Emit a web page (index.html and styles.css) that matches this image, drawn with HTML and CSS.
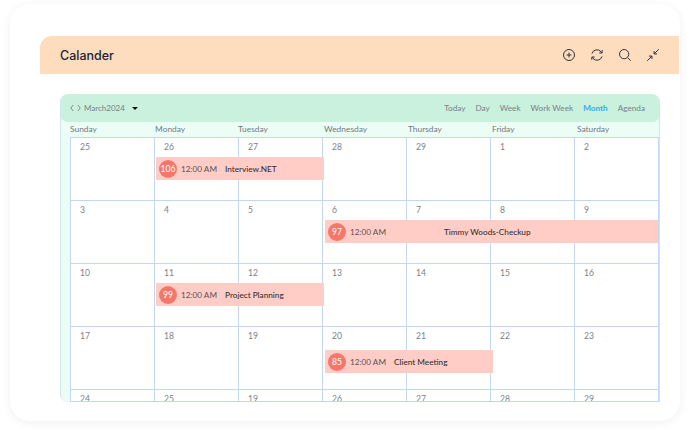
FILE: index.html
```html
<!DOCTYPE html>
<html lang="en">
<head>
  <meta charset="UTF-8">
  <meta name="viewport" content="width=device-width, initial-scale=1.0">
  <title>Calander</title>
  <link rel="stylesheet" href="styles.css">
</head>
<body>
  <div class="card">
    <!-- Page header -->
    <div class="page-header">
      <h1>Calander</h1>
      <div class="header-icons">
        <svg class="icon" viewBox="0 0 16 16"><circle cx="8" cy="8" r="6.3"/><path d="M8 5.2v5.6M5.2 8h5.6"/></svg>
        <svg class="icon" viewBox="0 0 16 16"><path d="M2.2 6.4A6 6 0 0 1 12.6 4.2L13.8 5.6"/><path d="M13.9 2.4v3.3h-3.3"/><path d="M13.8 9.6A6 6 0 0 1 3.4 11.8L2.2 10.4"/><path d="M2.1 13.6v-3.3h3.3"/></svg>
        <svg class="icon" viewBox="0 0 16 16"><circle cx="7" cy="7" r="5.3"/><path d="M11 11l3.6 3.6"/></svg>
        <svg class="icon" viewBox="0 0 16 16"><path d="M14.6 1.4L9.4 6.6M9.2 3.4v3.4h3.4"/><path d="M1.4 14.6l5.2-5.2M6.8 12.6V9.2H3.4"/></svg>
      </div>
    </div>

    <!-- Calendar -->
    <div class="calendar">
      <div class="toolbar">
        <div class="toolbar-left">
          <svg class="chevrons" viewBox="0 0 11 8"><path d="M3.2 1L.8 4l2.4 3"/><path d="M7.8 1l2.4 3-2.4 3"/></svg>
          <span class="month-label">March2024</span>
          <span class="caret"></span>
        </div>
        <div class="views">
          <span>Today</span>
          <span>Day</span>
          <span>Week</span>
          <span>Work Week</span>
          <span class="active">Month</span>
          <span>Agenda</span>
        </div>
      </div>

      <div class="weekdays">
        <span>Sunday</span>
        <span>Monday</span>
        <span>Tuesday</span>
        <span>Wednesday</span>
        <span>Thursday</span>
        <span>Friday</span>
        <span>Saturday</span>
      </div>

      <div class="grid">
        <div class="week">
          <div class="day">25</div><div class="day">26</div><div class="day">27</div><div class="day">28</div><div class="day">29</div><div class="day">1</div><div class="day">2</div>
          <div class="event event-mon">
            <span class="badge">106</span><span class="time">12:00 AM</span><span class="title">Interview.NET</span>
          </div>
        </div>
        <div class="week">
          <div class="day">3</div><div class="day">4</div><div class="day">5</div><div class="day">6</div><div class="day">7</div><div class="day">8</div><div class="day">9</div>
          <div class="event event-wide">
            <span class="badge">97</span><span class="time">12:00 AM</span><span class="title">Timmy Woods-Checkup</span>
          </div>
        </div>
        <div class="week">
          <div class="day">10</div><div class="day">11</div><div class="day">12</div><div class="day">13</div><div class="day">14</div><div class="day">15</div><div class="day">16</div>
          <div class="event event-mon">
            <span class="badge">99</span><span class="time">12:00 AM</span><span class="title">Project Planning</span>
          </div>
        </div>
        <div class="week">
          <div class="day">17</div><div class="day">18</div><div class="day">19</div><div class="day">20</div><div class="day">21</div><div class="day">22</div><div class="day">23</div>
          <div class="event event-wed">
            <span class="badge">85</span><span class="time">12:00 AM</span><span class="title">Client Meeting</span>
          </div>
        </div>
        <div class="week week-cut">
          <div class="day">24</div><div class="day">25</div><div class="day">19</div><div class="day">26</div><div class="day">27</div><div class="day">28</div><div class="day">29</div>
        </div>
      </div>
    </div>
  </div>
</body>
</html>
```

FILE: styles.css
```css
* {
  box-sizing: border-box;
}
body {
  margin: 0;
  width: 690px;
  height: 435px;
  overflow: hidden;
  background-color: #fff;
  font-family: "Lato", Arial, sans-serif;
}
.card {
  width: 670px;
  height: 417px;
  margin: 4px 0 0 10px;
  padding: 32px 1px 0 30px;
  background-color: #fff;
  border-radius: 20px;
  box-shadow: 0 2px 10px rgba(60, 60, 80, 0.07);
}

/* header */
.page-header {
  display: flex;
  justify-content: space-between;
  align-items: center;
  height: 38px;
  padding: 0 19px 0 20px;
  background-color: #fedcbe;
  border-top-left-radius: 12px;
}
.page-header h1 {
  margin: 0;
  font-family: "Inter", Arial, sans-serif;
  font-size: 12.5px;
  font-weight: 500;
  color: #1f2433;
}
.header-icons {
  display: flex;
  gap: 14px;
}
.icon {
  width: 14px;
  height: 14px;
  fill: none;
  stroke: #2b2f3a;
  stroke-width: 1.1;
}

/* calendar */
.calendar {
  width: 600px;
  height: 308px;
  margin: 20px 0 0 20px;
  overflow: hidden;
  background-color: #ecfdf5;
  border-left: 1px solid #d3e4f5;
  border-right: 1px solid #d3e4f5;
  border-radius: 8px 8px 0 8px;
}
.toolbar {
  display: flex;
  justify-content: space-between;
  align-items: center;
  height: 28px;
  margin: 0 -1px;
  padding: 0 15px 0 10px;
  background-color: #c9f1dd;
  border-radius: 8px;
  font-size: 8.2px;
  color: #7c8088;
}
.toolbar-left {
  display: flex;
  align-items: center;
}
.chevrons {
  width: 11px;
  height: 8px;
  fill: none;
  stroke: #7c8088;
  stroke-width: 0.9;
}
.month-label {
  margin-left: 3px;
  font-size: 8px;
}
.caret {
  margin-left: 7px;
  border-top: 3px solid #111;
  border-left: 3px solid transparent;
  border-right: 3px solid transparent;
}
.views {
  display: flex;
  gap: 10px;
}
.views .active {
  color: #3ba5f5;
  font-weight: 700;
}
.weekdays {
  display: grid;
  grid-template-columns: 85px 83px 86px 84px 84px 85px 1fr;
  height: 15px;
  padding-left: 9px;
  font-size: 8.4px;
  line-height: 15px;
  color: #74787f;
}

.grid {
  width: 589px;
  margin-left: 9px;
  background-color: #fff;
  border-top: 1px solid #c5d6f2;
  border-left: 1px solid #c5d6f2;
}
.week {
  display: grid;
  grid-template-columns: repeat(7, 84px);
  height: 63px;
}
.week-cut {
  height: 12px;
}
.day {
  grid-row: 1;
  padding: 4px 0 0 9px;
  overflow: hidden;
  border-right: 1px solid #c5d6f2;
  border-bottom: 1px solid #c5d6f2;
  font-size: 8.6px;
  line-height: 11px;
  color: #7c8088;
}
.day:nth-child(1) { grid-column: 1; }
.day:nth-child(2) { grid-column: 2; }
.day:nth-child(3) { grid-column: 3; }
.day:nth-child(4) { grid-column: 4; }
.day:nth-child(5) { grid-column: 5; }
.day:nth-child(6) { grid-column: 6; }
.day:nth-child(7) { grid-column: 7; }

/* events sit on top of the day cells */
.event {
  grid-row: 1;
  align-self: start;
  display: flex;
  align-items: center;
  height: 23px;
  margin-top: 19px;
  padding-left: 3px;
  background-color: #ffccc6;
  font-size: 8.2px;
  color: #555;
}
.event-mon {
  grid-column: 2 / span 2;
  margin-left: 1px;
  margin-right: -1px;
}
.event-wed {
  grid-column: 4 / span 2;
  margin-top: 23px;
  margin-left: 2px;
  margin-right: -2px;
}
.event-wide {
  grid-column: 4 / span 4;
  margin-left: 2px;
  margin-right: 1px;
}
.event-wide .title {
  margin-left: 58px;
}
.badge {
  display: flex;
  justify-content: center;
  align-items: center;
  width: 18px;
  height: 18px;
  border-radius: 50%;
  background-color: #f5776a;
  color: #fff;
  font-size: 8.6px;
}
.time {
  margin-left: 4px;
}
.title {
  margin-left: 8px;
  color: #333;
  font-weight: 500;
}
```
